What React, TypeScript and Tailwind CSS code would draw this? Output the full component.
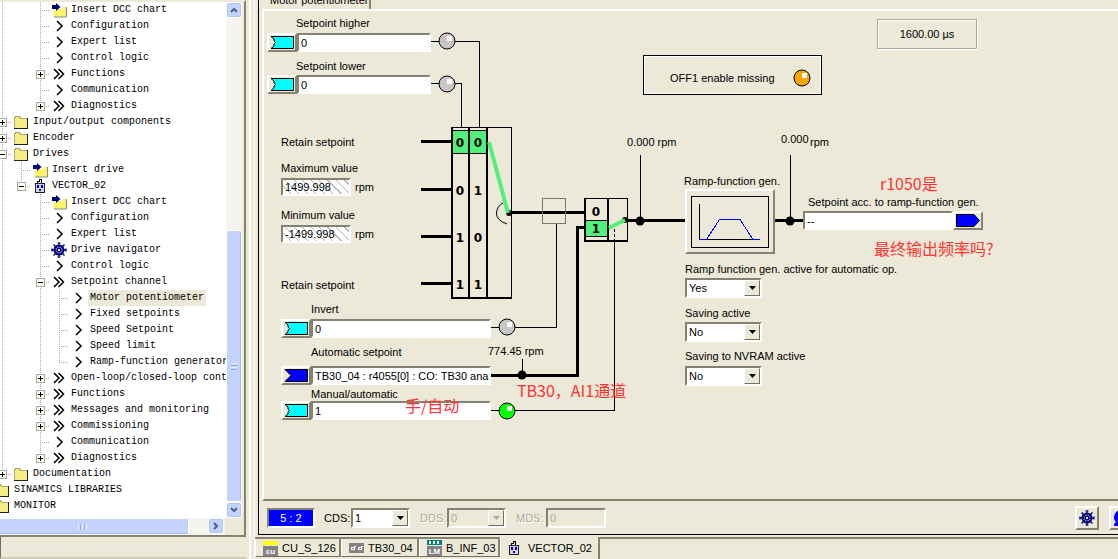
import type { ReactNode } from "react";
import clsx from "clsx";

type IconName = "insert" | "page" | "group" | "folder" | "drive" | "wheel";

interface TreeRow {
  // one character per indent column:
  // "|" line, " " empty, "t" branch, "l" last branch, "+" closed, "-" open, "e"/"c" last open/closed
  guides: string;
  icon: IconName;
  text: string;
  selected?: boolean;
}

const TREE: TreeRow[] = [
  { guides: "| t", icon: "insert", text: "Insert DCC chart" },
  { guides: "| t", icon: "page", text: "Configuration" },
  { guides: "| t", icon: "page", text: "Expert list" },
  { guides: "| t", icon: "page", text: "Control logic" },
  { guides: "| +", icon: "group", text: "Functions" },
  { guides: "| t", icon: "page", text: "Communication" },
  { guides: "| c", icon: "group", text: "Diagnostics" },
  { guides: "+", icon: "folder", text: "Input/output components" },
  { guides: "+", icon: "folder", text: "Encoder" },
  { guides: "-", icon: "folder", text: "Drives" },
  { guides: "|t", icon: "insert", text: "Insert drive" },
  { guides: "|e", icon: "drive", text: "VECTOR_02" },
  { guides: "| t", icon: "insert", text: "Insert DCC chart" },
  { guides: "| t", icon: "page", text: "Configuration" },
  { guides: "| t", icon: "page", text: "Expert list" },
  { guides: "| t", icon: "wheel", text: "Drive navigator" },
  { guides: "| t", icon: "page", text: "Control logic" },
  { guides: "| -", icon: "group", text: "Setpoint channel" },
  { guides: "| |t", icon: "page", text: "Motor potentiometer", selected: true },
  { guides: "| |t", icon: "page", text: "Fixed setpoints" },
  { guides: "| |t", icon: "page", text: "Speed Setpoint" },
  { guides: "| |t", icon: "page", text: "Speed limit" },
  { guides: "| |l", icon: "page", text: "Ramp-function generator" },
  { guides: "| +", icon: "group", text: "Open-loop/closed-loop control" },
  { guides: "| +", icon: "group", text: "Functions" },
  { guides: "| +", icon: "group", text: "Messages and monitoring" },
  { guides: "| +", icon: "group", text: "Commissioning" },
  { guides: "| t", icon: "page", text: "Communication" },
  { guides: "| c", icon: "group", text: "Diagnostics" },
  { guides: "c", icon: "folder", text: "Documentation" },
  { guides: "", icon: "folder", text: "SINAMICS LIBRARIES" },
  { guides: "", icon: "folder", text: "MONITOR" },
];

const SUNKEN =
  "border-2 border-t-[#858271] border-l-[#858271] border-r-white border-b-white";
const RAISED =
  "border-2 border-t-white border-l-white border-r-[#858271] border-b-[#858271]";

function Guide({ kind }: { kind: string }) {
  const box = "+-ec".includes(kind);
  const through = "|t+-".includes(kind);
  return (
    <svg className="h-4 w-[19px] shrink-0" viewBox="0 0 19 16" shapeRendering="crispEdges">
      <g stroke="#aca899" strokeDasharray="1 1">
        {kind !== " " && <path d={through ? "M9.5 0V16" : "M9.5 0V8"} />}
        {!"| ".includes(kind) && <path d="M9 8.5H19" />}
      </g>
      {box && (
        <>
          <rect x="5.5" y="4.5" width="8" height="8" fill="#fff" stroke="#aca899" />
          <path d={"+c".includes(kind) ? "M7 8.5H12M9.5 6V11" : "M7 8.5H12"} stroke="#000" />
        </>
      )}
    </svg>
  );
}

function Wheel({ className }: { className?: string }) {
  return (
    <svg className={className} viewBox="0 0 16 16" fill="none" stroke="#00007b">
      <circle cx="8" cy="8" r="4.5" strokeWidth="2" />
      <path d="M8 0.5V15.5M0.5 8H15.5M2.5 2.5L13.5 13.5M13.5 2.5L2.5 13.5" strokeWidth="1.4" />
      <path d="M6.5 1H9.5M6.5 15H9.5M1 6.5V9.5M15 6.5V9.5" strokeWidth="1.2" />
      <circle cx="8" cy="8" r="1.6" fill="#fff" />
    </svg>
  );
}

function DriveIcon() {
  return (
    <svg className="h-4 w-4" viewBox="0 0 16 16" shapeRendering="crispEdges">
      <path d="M5.5 5V3.5H7.5V1.500H9.500V5" fill="none" stroke="#000" />
      <rect x="3.5" y="5.5" width="9" height="9" fill="#d4d4dc" stroke="#222" />
      <path d="M5 7H7V10H5zM9 7H11V10H9zM7 11H9V13H7z" fill="#0000f0" />
    </svg>
  );
}

function TreeIcon({ name }: { name: IconName }) {
  if (name === "drive") return <DriveIcon />;
  if (name === "wheel") return <Wheel className="h-4 w-4" />;
  return (
    <svg className="h-4 w-4" viewBox="0 0 16 16">
      {name === "page" && (
        <path d="M6 3L11 8L6 13" fill="none" stroke="#000" strokeWidth="1.5" />
      )}
      {name === "group" && (
        <path d="M3 3L8 8L3 13M7.500 3L12.500 8L7.500 13" fill="none" stroke="#000" strokeWidth="1.5" />
      )}
      {name === "folder" && (
        <g shapeRendering="crispEdges">
          <path d="M1 14V4L2 2H6L8 4H14V14z" fill="#f4ee84" />
          <path d="M1.500 14V4.500L2.500 2.500H6L8 4.500H14" fill="none" stroke="#aca86a" />
          <path d="M1 14.500H15M14.500 4V14" fill="none" stroke="#222" />
        </g>
      )}
      {name === "insert" && (
        <>
          <path d="M3 7H11L12 5H15V15H3z" fill="#fbf36c" />
          <path d="M3 15H15.500V5" fill="none" stroke="#8a8a8a" />
          <path d="M1 3H5V1L9.500 5L5 9V7H1z" fill="#00007b" />
        </>
      )}
    </svg>
  );
}

function ScrollButton({ label, path }: { label: string; path: string }) {
  return (
    <button
      type="button"
      aria-label={label}
      className="flex h-4 w-4 shrink-0 items-center justify-center rounded-[3px] border border-white bg-[#c3d3fc] shadow-[inset_0_0_0_1px_#b0c4f0]"
    >
      <svg className="h-2 w-2" viewBox="0 0 8 8" fill="none" stroke="#4d6185" strokeWidth="2">
        <path d={path} />
      </svg>
    </button>
  );
}

function ProjectTree() {
  return (
    <aside className="flex w-[246px] shrink-0 flex-col bg-[#ece9d8]">
      <div className="flex min-h-0 flex-1 flex-col border-t-2 border-r-2 border-b-2 border-t-[#ece9d8] border-r-[#86836f] border-b-[#86836f] pr-[2px]">
        <div className="flex min-h-0 flex-1">
          <ul
            role="tree"
            aria-label="Project"
            className="min-w-0 flex-1 overflow-hidden bg-white font-['Liberation_Mono',monospace] text-[10px] leading-4"
          >
            {TREE.map((row, i) => (
              <li key={i} role="treeitem" aria-selected={!!row.selected} className="-ml-[7px] flex h-4">
                {[...row.guides].map((kind, col) => (
                  <Guide key={col} kind={kind} />
                ))}
                <span className="mr-1 ml-px flex w-4 shrink-0">
                  <TreeIcon name={row.icon} />
                </span>
                <span
                  className={clsx(
                    "-ml-0.5 whitespace-nowrap px-0.5",
                    row.selected && "bg-[#ece9d8]",
                  )}
                >
                  {row.text}
                </span>
              </li>
            ))}
          </ul>
          <div className="flex w-4 shrink-0 flex-col bg-[#f5f4ee]">
            <ScrollButton label="Scroll up" path="M1 6L4 3L7 6" />
            <div className="basis-[212px]" />
            <div className="flex flex-1 flex-col items-center justify-center gap-px rounded-[2px] border border-white bg-[#c3d3fc] shadow-[inset_-1px_0_0_#9fb5ea]">
              <span className="h-px w-1.5 bg-[#eef4fe]" />
              <span className="h-px w-1.5 bg-[#8cb0f8]" />
              <span className="h-px w-1.5 bg-[#eef4fe]" />
              <span className="h-px w-1.5 bg-[#8cb0f8]" />
            </div>
            <ScrollButton label="Scroll down" path="M1 2L4 5L7 2" />
          </div>
        </div>
        <div className="flex h-[17px] shrink-0 bg-[#f5f4ee]">
          <div className="flex w-[189px] items-center justify-center gap-px rounded-r-[2px] border border-l-0 border-white bg-[#c3d3fc] pr-6 shadow-[inset_0_-1px_0_#9fb5ea]">
            <span className="h-1.5 w-px bg-[#eef4fe]" />
            <span className="h-1.5 w-px bg-[#8cb0f8]" />
            <span className="h-1.5 w-px bg-[#eef4fe]" />
            <span className="h-1.5 w-px bg-[#8cb0f8]" />
            <span className="h-1.5 w-px bg-[#eef4fe]" />
          </div>
          <div className="flex-1" />
          <ScrollButton label="Scroll right" path="M2 1L5 4L2 7" />
          <div className="ml-px w-[17px] bg-[#ece9d8]" />
        </div>
      </div>
      <div className="h-[22px] shrink-0 border-b-2 border-l border-b-[#d0ccba] border-l-[#716f64]" />
    </aside>
  );
}

function Caption({
  className,
  htmlFor,
  children,
}: {
  className: string;
  htmlFor?: string;
  children: ReactNode;
}) {
  const cls = clsx("absolute whitespace-nowrap leading-[14px]", className);
  return htmlFor ? (
    <label htmlFor={htmlFor} className={cls}>
      {children}
    </label>
  ) : (
    <span className={cls}>{children}</span>
  );
}

function ConnectorField({
  id,
  value,
  className,
  analog,
}: {
  id: string;
  value: string;
  className: string;
  analog?: boolean;
}) {
  return (
    <div className={clsx("absolute flex h-[19px]", className)}>
      <button
        type="button"
        aria-label="Interconnect"
        className={clsx("flex w-[30px] shrink-0 items-center justify-center", RAISED)}
      >
        <svg className="h-[13px] w-6" viewBox="0 0 24 13">
          <path
            d={analog ? "M1 .5H23.500V12.500H1L7 6.500z" : "M1 .5H23.500V12.500H1L4 10V8L5.500 6.500L4 5V3z"}
            fill={analog ? "#0000ff" : "#00ffff"}
            stroke="#000"
          />
        </svg>
      </button>
      <input
        id={id}
        defaultValue={value}
        className={clsx("min-w-0 flex-1 bg-white pl-0.5 outline-none", SUNKEN)}
      />
    </div>
  );
}

function LimitField({ id, value, className }: { id: string; value: string; className: string }) {
  return (
    <div className={clsx("absolute flex items-center gap-1", className)}>
      <input
        id={id}
        readOnly
        defaultValue={value}
        className={clsx(
          "h-[18px] w-[70px] bg-white bg-[repeating-linear-gradient(45deg,transparent_0,transparent_5px,#b4b4b4_5px,#b4b4b4_6px)] px-0.5 outline-none",
          SUNKEN,
        )}
      />
      <span>rpm</span>
    </div>
  );
}

function Dropdown({
  id,
  options,
  className,
  disabled,
}: {
  id: string;
  options: string[];
  className: string;
  disabled?: boolean;
}) {
  return (
    <div className={clsx("flex h-5", SUNKEN, disabled ? "bg-[#ece9d8]" : "bg-white", className)}>
      <select
        id={id}
        disabled={disabled}
        className="h-full min-w-0 flex-1 appearance-none pl-0.5 outline-none disabled:text-[#aca899]"
      >
        {options.map((option) => (
          <option key={option}>{option}</option>
        ))}
      </select>
      <span
        className={clsx(
          "pointer-events-none flex w-4 items-center justify-center bg-[#ece9d8]",
          "border border-t-white border-l-white border-r-[#716f64] border-b-[#716f64]",
        )}
      >
        <svg className="h-1 w-[7px]" viewBox="0 0 7 4">
          <path d="M0 0H7L3.500 4z" fill={disabled ? "#aca899" : "#000"} />
        </svg>
      </span>
    </div>
  );
}

function Lamp({ cx, cy, fill }: { cx: number; cy: number; fill: string }) {
  return (
    <g>
      <circle cx={cx} cy={cy} r="8" fill={fill} stroke="#000" />
      <rect x={cx} y={cy - 5} width="5" height="5" fill="#fff" />
    </g>
  );
}

const MUX_ROWS = [
  { y: 142, bits: ["0", "0"] },
  { y: 190, bits: ["0", "1"] },
  { y: 237, bits: ["1", "0"] },
  { y: 284, bits: ["1", "1"] },
];

// Signal lines, multiplexer, changeover switch and lamps
function SignalFlow() {
  return (
    <svg className="absolute top-0 left-0 h-[489px] w-[854px]" viewBox="264 11 854 489">
      <g fill="none" stroke="#000" shapeRendering="crispEdges">
        <path d="M431 41.500H479.500V127" />
        <path d="M431 83.500H461.500V127" />
        <path d="M491 327.500H556.500V224" />
        <path d="M491 410.500H614.500V242" />
        <path d="M614.500 229V240" strokeDasharray="3 2" />
        <path d="M522.500 359V375M640.500 155V220M790.500 155V220" />
        <g strokeWidth="3">
          {MUX_ROWS.map((row) => (
            <path key={row.y} d={`M421 ${row.y - 0.5}H452`} />
          ))}
          <path d="M509 212.500H584M490 375.500H577.500V227.500H584M628 220.500H685M775 220.500H803" />
        </g>
      </g>

      <g shapeRendering="crispEdges">
        <rect x="453" y="131" width="34" height="22" fill="#52f07a" />
        <path
          d="M452 127.500H511.500V298M453 130.500H487M453 153.500H487"
          fill="none"
          stroke="#000"
        />
        <path d="M452 127V298H512M469 127V298M487 127V298" fill="none" stroke="#000" strokeWidth="2" />
        <rect x="586" y="221" width="22" height="15" fill="#52f07a" />
        <path d="M585 198.500H627.500V241M586 220.500H608M586 236.500H608" fill="none" stroke="#000" />
        <path d="M585 198V241H628M608 198V241" fill="none" stroke="#000" strokeWidth="2" />
        <rect x="542.500" y="198.500" width="23" height="25" fill="none" stroke="#7b7869" />
      </g>

      <g
        className="font-['DejaVu_Sans',sans-serif] text-[12px] font-bold"
        textAnchor="middle"
      >
        {MUX_ROWS.map((row) => (
          <g key={row.y}>
            <text x="460" y={row.y + 5}>{row.bits[0]}</text>
            <text x="478" y={row.y + 5}>{row.bits[1]}</text>
          </g>
        ))}
        <text x="596" y="216">0</text>
        <text x="596" y="233">1</text>
      </g>

      <path d="M503 203Q497 206 496.500 213T507 224" fill="none" stroke="#000" />
      <circle cx="509" cy="213" r="3" />
      <circle cx="625" cy="220" r="3" />
      <path d="M489 142L508 213M609 228L625 220" stroke="#52f07a" strokeWidth="4" />

      <circle cx="522" cy="375" r="4.500" />
      <circle cx="640" cy="221" r="4.500" />
      <circle cx="790" cy="221" r="4.500" />

      <Lamp cx={447} cy={41} fill="#c6c6c6" />
      <Lamp cx={447} cy={84} fill="#c6c6c6" />
      <Lamp cx={507} cy={327} fill="#c6c6c6" />
      <Lamp cx={507} cy={411} fill="#00ff00" />
    </svg>
  );
}

function Remark({ className, children }: { className: string; children: ReactNode }) {
  return (
    <span
      className={clsx(
        "absolute whitespace-nowrap font-['Noto_Sans_CJK_SC',sans-serif] text-[16px] leading-5 text-[#ff3333]",
        className,
      )}
    >
      {children}
    </span>
  );
}

function PotentiometerDiagram() {
  return (
    <div className="relative min-h-0 flex-1 overflow-hidden border-2 border-r-0 border-t-white border-b-[#86836f] border-l-white">
      <SignalFlow />

      <Caption htmlFor="higher" className="top-[5px] left-8">Setpoint higher</Caption>
      <ConnectorField id="higher" value="0" className="top-[22px] left-[3px] w-[164px]" />
      <Caption htmlFor="lower" className="top-12 left-8">Setpoint lower</Caption>
      <ConnectorField id="lower" value="0" className="top-16 left-[3px] w-[164px]" />

      <Caption className="top-[124px] left-[17px]">Retain setpoint</Caption>
      <Caption htmlFor="max" className="top-[150px] left-[17px]">Maximum value</Caption>
      <LimitField id="max" value="1499.998" className="top-[167px] left-[17px]" />
      <Caption htmlFor="min" className="top-[197px] left-[17px]">Minimum value</Caption>
      <LimitField id="min" value="-1499.998" className="top-[214px] left-[17px]" />
      <Caption className="top-[267px] left-[17px]">Retain setpoint</Caption>

      <Caption htmlFor="invert" className="top-[291px] left-[47px]">Invert</Caption>
      <ConnectorField id="invert" value="0" className="top-[308px] left-[17px] w-[210px]" />
      <Caption htmlFor="automatic" className="top-[334px] left-[47px]">Automatic setpoint</Caption>
      <ConnectorField
        id="automatic"
        value="TB30_04 : r4055[0] : CO: TB30 analog inputs"
        className="top-[355px] left-[17px] w-[210px]"
        analog
      />
      <Caption htmlFor="manual" className="top-[376px] left-[47px]">Manual/automatic</Caption>
      <ConnectorField id="manual" value="1" className="top-[390px] left-[17px] w-[210px]" />

      <Caption className="top-[333px] left-56">774.45 rpm</Caption>
      <Caption className="top-[124px] left-[363px]">0.000 rpm</Caption>
      <Caption className="top-[121px] left-[517px]">0.000</Caption>
      <Caption className="top-[124px] left-[546px]">rpm</Caption>

      <div className="absolute top-11 left-[379px] flex h-10 w-[179px] items-center justify-between border border-black pr-2.5 pl-[26px] pt-1.5 shadow-[inset_1px_1px_0_#fff,inset_-1px_-1px_0_#fff]">
        <span>OFF1 enable missing</span>
        <svg className="h-[18px] w-[18px]" viewBox="0 0 18 18">
          <Lamp cx={9} cy={9} fill="#ffa500" />
        </svg>
      </div>
      <div className="absolute top-2 left-[613px] flex h-[30px] w-[100px] items-center justify-center border border-[#aca899] shadow-[inset_1px_1px_0_#fff,1px_1px_0_#fff]">
        1600.00 µs
      </div>

      <Caption className="top-[163px] left-[420px]">Ramp-function gen.</Caption>
      <button
        type="button"
        aria-label="Ramp-function generator"
        className={clsx(
          "absolute top-[178px] left-[421px] flex h-[65px] w-[90px] items-center justify-center bg-[#ece9d8]",
          RAISED,
        )}
      >
        <svg className="h-[52px] w-[78px]" viewBox="0 0 78 52" fill="none" shapeRendering="crispEdges">
          <rect x=".5" y=".5" width="77" height="51" stroke="#000" />
          <path d="M8.500 8V43.500H62" stroke="#000" />
          <path d="M8 43.500H15.500L28.500 23.500H49L62 43.500H69" stroke="#0000ff" />
        </svg>
      </button>

      <Caption htmlFor="output" className="top-[184px] left-[544px]">
        Setpoint acc. to ramp-function gen.
      </Caption>
      <div className="absolute top-[200px] left-[539px] flex h-[19px] w-[180px]">
        <input
          id="output"
          readOnly
          defaultValue="--"
          className={clsx("min-w-0 flex-1 bg-white pl-0.5 outline-none", SUNKEN)}
        />
        <button
          type="button"
          aria-label="Further interconnections"
          className={clsx("flex w-[30px] items-center justify-center", RAISED)}
        >
          <svg className="h-[13px] w-6" viewBox="0 0 24 13">
            <path d="M.5 .5H18L23.500 6.500L18 12.500H.5z" fill="#0000ff" stroke="#000" />
          </svg>
        </button>
      </div>

      <Caption htmlFor="active" className="top-[251px] left-[421px]">
        Ramp function gen. active for automatic op.
      </Caption>
      <Dropdown id="active" options={["Yes", "No"]} className="absolute top-[267px] left-[421px] w-[77px]" />
      <Caption htmlFor="saving" className="top-[295px] left-[421px]">Saving active</Caption>
      <Dropdown id="saving" options={["No", "Yes"]} className="absolute top-[311px] left-[421px] w-[77px]" />
      <Caption htmlFor="nvram" className="top-[338px] left-[421px]">Saving to NVRAM active</Caption>
      <Dropdown id="nvram" options={["No", "Yes"]} className="absolute top-[355px] left-[421px] w-[77px]" />

      <Remark className="top-[162px] left-[616px]">r1050是</Remark>
      <Remark className="top-[227px] left-[610px]">最终输出频率吗?</Remark>
      <Remark className="top-[369px] left-[253px]">TB30，AI1通道</Remark>
      <Remark className="top-[384px] left-[141px]">手/自动</Remark>
    </div>
  );
}

function DataSetBar() {
  return (
    <div className="flex h-[33px] shrink-0 items-center overflow-hidden pl-[5px]">
      <output className={clsx("flex h-5 w-12 items-center justify-center bg-[#0000ff] text-white", SUNKEN)}>
        5 : 2
      </output>
      <label htmlFor="cds" className="w-9 pl-[9px]">CDS:</label>
      <Dropdown id="cds" options={["1"]} className="w-[59px]" />
      <label htmlFor="dds" className="w-[37px] pl-2.5 text-[#aca899] [text-shadow:1px_1px_0_#fff]">DDS:</label>
      <Dropdown id="dds" options={["0"]} className="w-[59px]" disabled />
      <label htmlFor="mds" className="w-10 pl-2.5 text-[#aca899] [text-shadow:1px_1px_0_#fff]">MDS:</label>
      <input
        id="mds"
        disabled
        defaultValue="0"
        className={clsx("h-5 w-[60px] bg-[#ece9d8] pl-0.5 text-[#aca899]", SUNKEN)}
      />
      <div className="flex-1" />
      <button
        type="button"
        aria-label="Drive navigator"
        className={clsx("flex h-6 w-6 shrink-0 items-center justify-center", RAISED)}
      >
        <Wheel className="h-4 w-4" />
      </button>
      <button
        type="button"
        aria-label="Help"
        className={clsx("-mr-4 ml-2.5 flex h-6 w-[25px] shrink-0 items-center", RAISED)}
      >
        <svg className="ml-0.5 h-[18px] w-4 shrink-0" viewBox="0 0 16 18">
          <path d="M9 1C3 1 1 5 1 9C1 11 2.500 12 3 13L1 15V17H14V1z" fill="#0000ff" />
          <circle cx="9" cy="7" r="3" fill="#fff" />
        </svg>
      </button>
    </div>
  );
}

function ModuleIcon({ kind }: { kind: "cu" | "tb" | "lm" }) {
  return (
    <svg className="h-4 w-[15px]" viewBox="0 0 15 16" shapeRendering="crispEdges">
      {kind === "cu" && <rect x="0" y="1" width="15" height="4" fill="#ffff00" />}
      {kind === "lm" && (
        <path d="M0 0H15V5H0zM2 1V4H4V1zM6 1V4H8V1zM10 1V4H12V1z" fill="#008080" fillRule="evenodd" />
      )}
      {kind === "tb" ? (
        <>
          <rect x="0" y="3" width="15" height="10" fill="#848284" />
          <path d="M2.500 9.500V7.500H5.500V9.500zM5 6.500H7M9.500 9.500V7.500H12.500V9.500zM12 6.500H14" fill="none" stroke="#fff" />
        </>
      ) : (
        <>
          <rect x="0" y="6" width="15" height="10" fill="#848284" />
          <text
            x="7.500"
            y="14"
            fill="#fff"
            textAnchor="middle"
            className="font-['Liberation_Sans',sans-serif] text-[8px] font-bold"
          >
            {kind === "cu" ? "cu" : "LM"}
          </text>
        </>
      )}
    </svg>
  );
}

const TABS = [
  { text: "CU_S_126", icon: <ModuleIcon kind="cu" />, width: "w-[86px]" },
  { text: "TB30_04", icon: <ModuleIcon kind="tb" />, width: "w-[78px]" },
  { text: "B_INF_03", icon: <ModuleIcon kind="lm" />, width: "w-[81px]" },
];

function WindowTabs() {
  return (
    <nav role="tablist" className="flex h-6 shrink-0 pt-0.5">
      {TABS.map((tab) => (
        <div key={tab.text} className="border-t-2 border-[#86836f] pb-0.5">
          <button
            type="button"
            role="tab"
            aria-selected={false}
            className={clsx(
              "flex h-full items-center gap-1 border-r-2 border-b border-l border-r-[#86836f] border-b-[#716f64] border-l-white pl-[7px]",
              tab.width,
            )}
          >
            {tab.icon}
            {tab.text}
          </button>
        </div>
      ))}
      <button
        type="button"
        role="tab"
        aria-selected
        className="flex w-[100px] items-center gap-1.5 border-r-2 border-l border-r-[#86836f] border-l-white pl-[5px]"
      >
        <DriveIcon />
        VECTOR_02
      </button>
      <div className="flex-1 border-t-2 border-[#86836f]" />
    </nav>
  );
}

export default function App() {
  return (
    <div className="flex h-screen overflow-hidden bg-[#ece9d8] font-['Liberation_Sans',Arial,sans-serif] text-[11px] leading-[14px] text-black">
      <ProjectTree />
      <div className="flex w-[9px] shrink-0 justify-center border-r border-white">
        <div className="w-0.5 bg-[#fdfcf5]" />
      </div>
      <main className="flex min-w-0 flex-1 flex-col">
        <section className="ml-[3px] flex min-h-0 flex-1 flex-col border-b border-l border-black pl-[3px]">
          <div className="flex h-[9px] shrink-0 items-end overflow-hidden">
            <button
              type="button"
              className="w-[109px] border-r-2 border-[#86836f] pb-0.5 pl-2 text-left whitespace-nowrap"
            >
              Motor potentiometer
            </button>
          </div>
          <PotentiometerDiagram />
          <DataSetBar />
        </section>
        <WindowTabs />
      </main>
    </div>
  );
}
